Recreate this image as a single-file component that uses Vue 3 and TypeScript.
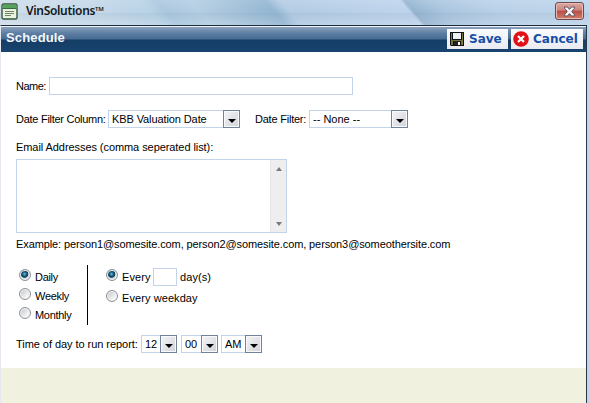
<script setup lang="ts">
import { ref } from 'vue'

const frequencies: string[] = ['Daily', 'Weekly', 'Monthly']
const frequency = ref('Daily')
const pattern = ref('days')
</script>

<template>
  <div class="window">
    <header class="titlebar">
      <svg class="app-icon" width="17" height="17" viewBox="0 0 17 17">
        <rect x="1" y="1" width="15" height="15" rx="1.5" fill="#e9f2dd" stroke="#35553e" stroke-width="1.4" />
        <path d="M1.7 1.7h13.6v3.6H1.7z" fill="#54a45d" />
        <path d="M1.7 5.5h13.6" stroke="#376b43" />
        <path d="M4 8.5h9M4 10.5h9M4 12.5h6" stroke="#71866a" />
      </svg>
      <h1>VinSolutions<sup>TM</sup></h1>
      <button class="close" aria-label="Close">
        <svg width="13" height="11" viewBox="0 0 13 11">
          <path d="M1.5 1h3l2 2.4L8.500 1h3v1.200L8.700 5.500l2.800 3.300V10h-3l-2-2.400L4.500 10h-3V8.800l2.800-3.300L1.500 2.200z" fill="#f4f4f5" stroke="#5e5663" />
        </svg>
      </button>
    </header>
    <div class="client">
      <div class="toolbar">
        <h2>Schedule</h2>
        <button class="action save">
          <svg width="14" height="14" viewBox="0 0 14 14">
            <path d="M0 0h14v14H1l-1-1z" fill="#111" />
            <path d="M1 1h1v7h10V1h1v12h-2V9H3v4H1z" fill="#77763a" />
            <path d="M3 1h8v6H3z" fill="#eef0f4" />
            <path d="M4 9h6v4H4z" fill="#222" />
            <path d="M8 10h2v3H8z" fill="#fff" />
          </svg>
          <span>Save</span>
        </button>
        <button class="action cancel">
          <svg width="16" height="16" viewBox="0 0 16 16">
            <circle cx="8" cy="8" r="7.8" fill="#e01016" />
            <path d="M5 5l6 6M11 5l-6 6" stroke="#fff" stroke-width="2.3" />
          </svg>
          <span>Cancel</span>
        </button>
      </div>

      <main class="form">
        <div class="row name-row">
          <span class="label w-name">Name:</span>
          <span class="box name-input"></span>
        </div>
        <div class="row filter-row">
          <span class="label w-column">Date Filter Column:</span>
          <span class="box select column-select"><span class="t-kbb">KBB Valuation Date</span><i class="arrow"></i></span>
          <span class="label w-filter">Date Filter:</span>
          <span class="box select filter-select"><span>-- None --</span><i class="arrow"></i></span>
        </div>
        <div class="email-label">Email Addresses (comma seperated list):</div>
        <div class="box textarea">
          <div class="scroll"><i class="up"></i><i class="down"></i></div>
        </div>
        <div class="example">Example: person1@somesite.com, person2@somesite.com, person3@someothersite.com</div>
        <div class="recurrence">
          <div class="frequency">
            <div v-for="f in frequencies" :key="f" class="option" @click="frequency = f">
              <i class="radio" :class="{ on: frequency === f }"></i><span>{{ f }}</span>
            </div>
          </div>
          <div class="pattern">
            <div class="option first" @click="pattern = 'days'">
              <i class="radio" :class="{ on: pattern === 'days' }"></i><span class="every">Every</span>
              <span class="box days"></span><span>day(s)</span>
            </div>
            <div class="option" @click="pattern = 'weekday'">
              <i class="radio" :class="{ on: pattern === 'weekday' }"></i><span>Every weekday</span>
            </div>
          </div>
        </div>
        <div class="row time-row">
          <span class="label w-time">Time of day to run report:</span>
          <span class="box select hour"><span>12</span><i class="arrow"></i></span>
          <span class="box select minute"><span>00</span><i class="arrow"></i></span>
          <span class="box select ampm"><span>AM</span><i class="arrow"></i></span>
        </div>
      </main>
      <footer class="footer"></footer>
    </div>
  </div>
</template>

<style>
body {
  margin: 0;
  overflow: hidden;
}
</style>

<style scoped>
* {
  box-sizing: border-box;
}
.window {
  width: 589px;
  height: 403px;
  display: flex;
  flex-direction: column;
  background: #c1d5ea;
  font: 11px/14px "Liberation Sans", Arial, sans-serif;
  color: #000;
  white-space: nowrap;
}
.titlebar {
  height: 25px;
  display: flex;
  align-items: flex-start;
  background:
    linear-gradient(#ffffff22, #ffffff00 50%, #8099aa22 51%, #ffffff22),
    linear-gradient(49deg, #cfdeeb 8px, #c5d8e9 76px, #b8d2e6 122px, #a9c6de 134px, #b3cde3 160px, #92b5d1 216px, #b2cbe4 227px, #bdd3ec 318px, #94b3d0 321px, #a9c5df 345px, #b8d0e8 385px, #bdd4ea 453px);
}
.app-icon {
  margin: 3px 0 0 1px;
}
h1 {
  margin: 3px 0 0 8px;
  flex: 1;
  font: 600 12px/15px "Noto Sans", "Open Sans", sans-serif;
  letter-spacing: -0.32px;
  color: #111820;
}
h1 sup {
  font-size: 6px;
  line-height: 0;
  vertical-align: 4px;
}
button {
  padding: 0;
  border: 0;
  font: inherit;
}
.close {
  width: 29px;
  height: 18px;
  margin: 2px 5px 0 0;
  display: flex;
  align-items: center;
  justify-content: center;
  border: 1px solid #684a55;
  border-radius: 3px;
  box-shadow: inset 0 0 0 1px #ecb8b2;
  background: linear-gradient(#dba8a2, #cc8580 45%, #b94d45 50%, #d17c69);
}
.client {
  width: 587px;
  flex: 1;
  display: flex;
  flex-direction: column;
  border-top: 1px solid #1c2c3b;
  border-right: 1px solid #26384a;
  border-left: 1px solid #e6e9ef;
}
.toolbar {
  height: 26px;
  display: flex;
  align-items: flex-start;
  border-top: 1px solid #edf3f8;
  background: linear-gradient(#8ba2bc 0, #5f7fa4 6px, #456b94 12px, #153d65 13px, #17436f 25px);
}
h2 {
  flex: 1;
  margin: 3px 0 0 5px;
  font: bold 13px/16px "Liberation Sans", Arial, sans-serif;
  letter-spacing: 0.15px;
  color: #f4f7fb;
}
.action {
  height: 20px;
  margin-top: 2px;
  display: flex;
  align-items: center;
  background: linear-gradient(#fafbfd, #e9ebf2);
  color: #174fa5;
  font: bold 12px/16px "DejaVu Sans", Verdana, sans-serif;
}
.save {
  width: 61px;
  padding-left: 3px;
  gap: 5px;
  margin-right: 3px;
}
.cancel {
  width: 72px;
  padding-left: 2px;
  gap: 4px;
  margin-right: 3px;
}
.form {
  height: 316px;
  padding: 25px 0 0 15px;
  background: #fff;
}
.row {
  display: flex;
  align-items: center;
  height: 18px;
}
.box {
  display: block;
  height: 18px;
  border: 1px solid #c3d3e9;
  background: #fff;
}
.label {
  flex: none;
}
.w-name { width: 33px; letter-spacing: -0.5px; }
.name-input { width: 304px; }
.filter-row { margin-top: 15px; }
.w-column { width: 92px; letter-spacing: -0.27px; }
.column-select { width: 132px; margin-right: 15px; }
.t-kbb { letter-spacing: -0.1px; }
.w-filter { width: 54px; letter-spacing: -0.22px; }
.filter-select { width: 99px; }
.select {
  display: flex;
  align-items: center;
  justify-content: space-between;
  padding-left: 3px;
}
.arrow {
  width: 17px;
  height: 18px;
  flex: none;
  margin-right: -1px;
  display: flex;
  align-items: center;
  justify-content: center;
  border: 1px solid #728298;
  box-shadow: inset 0 0 0 1px #f8f9fb;
  background: linear-gradient(135deg, #f5f5f7, #cfd2d8);
}
.arrow::after {
  content: "";
  margin-top: 3px;
  border: solid transparent;
  border-width: 4px 4px 0;
  border-top-color: #000;
}
.email-label { margin-top: 12px; height: 14px; letter-spacing: -0.07px; }
.textarea {
  width: 271px;
  height: 74px;
  margin-top: 5px;
  display: flex;
  justify-content: flex-end;
}
.scroll {
  width: 16px;
  display: flex;
  flex-direction: column;
  justify-content: space-between;
  align-items: center;
  padding: 7px 0 6px;
  border-left: 1px solid #e4e4e8;
  background: #eeeeef;
}
.up, .down {
  border: solid transparent;
  border-width: 0 3.5px 4px;
  border-bottom-color: #77797e;
}
.down {
  border-width: 4px 3.5px 0;
  border-top-color: #77797e;
}
.example { margin-top: 4px; height: 14px; letter-spacing: -0.105px; }
.recurrence {
  display: flex;
  height: 60px;
  margin-top: 14px;
}
.frequency {
  width: 72px;
  padding: 2px 0 0 3px;
  border-right: 1px solid #000;
  letter-spacing: -0.3px;
}
.option {
  display: flex;
  height: 19px;
  align-items: center;
}
.radio {
  width: 12px;
  height: 12px;
  margin: -3px 4px 0 0;
  flex: none;
  border: 1px solid #8b9095;
  border-radius: 50%;
  box-shadow: inset 0 0 0 1px #f6f6f6;
  background: linear-gradient(135deg, #bfc4ca, #f6f6f6 75%);
}
.radio.on {
  background: radial-gradient(circle at 45% 40%, #6cc4e8 0, #226488 1.8px, #123e5b 3.4px, #d5dde3 4.2px);
}
.pattern { padding: 2px 0 0 18px; letter-spacing: 0.08px; }
.pattern .option.first { height: 21px; padding-bottom: 2px; }
.every { width: 31px; }
.days { width: 24px; margin-right: 3px; }
.time-row { margin-top: 10px; }
.w-time { width: 125px; letter-spacing: -0.05px; }
.hour { width: 36px; margin-right: 4px; }
.minute { width: 37px; margin-right: 3px; }
.ampm { width: 41px; }
.footer {
  flex: 1;
  background: #f1f1df;
}
</style>
